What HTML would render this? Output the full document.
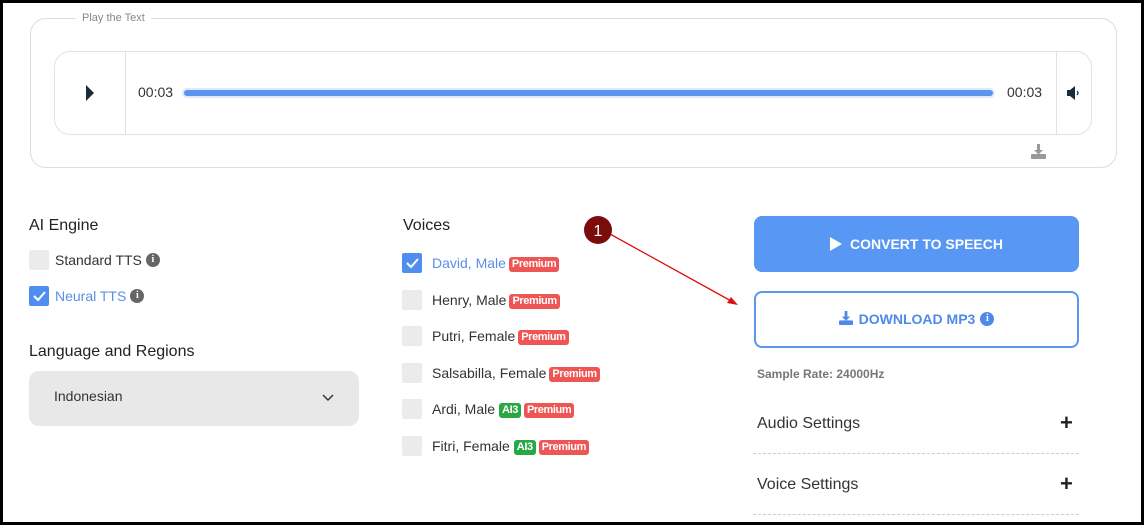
<!DOCTYPE html>
<html><head><style>
*{box-sizing:border-box;margin:0;padding:0}
body{width:1144px;height:525px;background:#000;font-family:"Liberation Sans",sans-serif;position:relative;overflow:hidden}
.page{position:absolute;left:3px;top:3px;width:1138px;height:519px;background:#fff}
.a{position:absolute}
.cb{position:absolute;width:20px;height:20px;background:#ebebeb;border-radius:2px}
.cb.on{background:#4f8ef0}
.lbl{position:absolute;font-size:14px;color:#333;line-height:16px;white-space:nowrap}
.tag{display:inline-block;font-size:11px;font-weight:bold;color:#fff;background:#ee5555;border-radius:3px;padding:1px 3px;line-height:13px;vertical-align:middle;margin-left:3px;letter-spacing:-0.4px}
.tag.g{background:#28a745;margin-left:4px}
.h{position:absolute;font-size:16px;color:#222}
.info{display:inline-block;width:14px;height:14px;border-radius:50%;background:#666;color:#fff;font-size:10px;font-weight:bold;text-align:center;line-height:14px;vertical-align:middle;margin-left:4px;margin-top:-2px;font-family:"Liberation Serif",serif}
.dash{position:absolute;left:753px;width:326px;border-top:1px dashed #ccc}
.plus{position:absolute;font-size:22px;font-weight:bold;color:#222;line-height:22px}
</style></head><body>
<div class="page"></div>
<div class="a" style="left:30px;top:18px;width:1087px;height:150px;border:1px solid #ddd;border-radius:16px"></div>
<div class="a" style="left:76px;top:12px;background:#fff;padding:0 6px;font-size:11px;color:#888">Play the Text</div>
<div class="a" style="left:54px;top:51px;width:1038px;height:84px;border:1px solid #e2e2e2;border-radius:16px"></div>
<div class="a" style="left:125px;top:52px;width:1px;height:82px;background:#e2e2e2"></div>
<div class="a" style="left:1056px;top:52px;width:1px;height:82px;background:#e2e2e2"></div>
<div class="a" style="left:86px;top:85px;width:0;height:0;border-left:8px solid #1a2a36;border-top:8px solid transparent;border-bottom:8px solid transparent"></div>
<div class="a" style="left:138px;top:84px;font-size:14px;color:#333">00:03</div>
<div class="a" style="left:1007px;top:84px;font-size:14px;color:#333">00:03</div>
<div class="a" style="left:182px;top:88px;width:813px;height:10px;border-radius:5px;background:#dfe9fb"></div>
<div class="a" style="left:184px;top:90px;width:809px;height:6px;border-radius:3px;background:#5a94ee"></div>
<svg class="a" style="left:1066px;top:86px" width="16" height="14" viewBox="0 0 16 14"><path d="M1 4h3l5-4v14l-5-4H1z" fill="#1a2a36"/><path d="M11 5q2 2 0 4" stroke="#1a2a36" fill="none" stroke-width="1.2"/></svg>
<svg class="a" style="left:1031px;top:144px" width="15" height="15" viewBox="0 0 15 15"><path d="M6 0h3v6h3l-4.5 4.5L3 6h3z" fill="#999"/><rect x="0" y="10" width="15" height="5" rx="1" fill="#999"/></svg>

<div class="h" style="left:29px;top:217px">AI Engine</div>
<div class="cb" style="left:29px;top:250px"></div>
<div class="lbl" style="left:55px;top:252px">Standard TTS<span class="info">i</span></div>
<div class="cb on" style="left:29px;top:286px"><svg width="20" height="20"><path d="M5 10l4 4 7-8" stroke="#fff" stroke-width="2" fill="none"/></svg></div>
<div class="lbl" style="left:55px;top:288px;color:#5a8fe8">Neural TTS<span class="info">i</span></div>
<div class="h" style="left:29px;top:343px">Language and Regions</div>
<div class="a" style="left:29px;top:371px;width:330px;height:55px;background:#e8e8e8;border-radius:10px"></div>
<div class="lbl" style="left:54px;top:388px">Indonesian</div>
<svg class="a" style="left:322px;top:394px" width="12" height="8"><path d="M1 1l5 5 5-5" stroke="#333" stroke-width="1.5" fill="none"/></svg>

<div class="h" style="left:403px;top:217px">Voices</div>
<div class="cb on" style="left:402px;top:253px"><svg width="20" height="20"><path d="M5 10l4 4 7-8" stroke="#fff" stroke-width="2" fill="none"/></svg></div>
<div class="lbl" style="left:432px;top:255px;color:#5a8fe8">David, Male<span class="tag">Premium</span></div>
<div class="cb" style="left:402px;top:290px"></div>
<div class="lbl" style="left:432px;top:292px">Henry, Male<span class="tag">Premium</span></div>
<div class="cb" style="left:402px;top:326px"></div>
<div class="lbl" style="left:432px;top:328px">Putri, Female<span class="tag">Premium</span></div>
<div class="cb" style="left:402px;top:363px"></div>
<div class="lbl" style="left:432px;top:365px">Salsabilla, Female<span class="tag">Premium</span></div>
<div class="cb" style="left:402px;top:399px"></div>
<div class="lbl" style="left:432px;top:401px">Ardi, Male<span class="tag g">AI3</span><span class="tag">Premium</span></div>
<div class="cb" style="left:402px;top:436px"></div>
<div class="lbl" style="left:432px;top:438px">Fitri, Female<span class="tag g">AI3</span><span class="tag">Premium</span></div>

<div class="a" style="left:754px;top:216px;width:325px;height:56px;background:#5897f3;border-radius:8px;color:#fff;font-weight:bold;font-size:14px;text-align:center;line-height:56px"><span style="display:inline-block;width:0;height:0;border-left:12px solid #fff;border-top:7px solid transparent;border-bottom:7px solid transparent;vertical-align:-2px;margin-right:8px"></span>CONVERT TO SPEECH</div>
<div class="a" style="left:754px;top:291px;width:325px;height:57px;border:2px solid #5b95ef;border-radius:8px;color:#4f8ae8;font-weight:bold;font-size:14px;text-align:center;line-height:53px"><svg width="14" height="14" viewBox="0 0 15 15" style="vertical-align:-1px;margin-right:6px"><path d="M6 0h3v6h3l-4.5 4.5L3 6h3z" fill="#4f8ae8"/><rect x="0" y="10" width="15" height="5" rx="1" fill="#4f8ae8"/></svg>DOWNLOAD MP3<span class="info" style="background:#4f8ae8;margin-left:5px">i</span></div>
<div class="a" style="left:757px;top:367px;font-size:12px;font-weight:bold;color:#777">Sample Rate: 24000Hz</div>
<div class="h" style="left:757px;top:415px;color:#333">Audio Settings</div>
<div class="plus" style="left:1060px;top:412px">+</div>
<div class="dash" style="top:453px"></div>
<div class="h" style="left:757px;top:476px;color:#333">Voice Settings</div>
<div class="plus" style="left:1060px;top:473px">+</div>
<div class="dash" style="top:514px"></div>

<svg class="a" style="left:0;top:0" width="1144" height="525"><line x1="610" y1="234" x2="733" y2="302" stroke="#dd1111" stroke-width="1.3"/><path d="M738 305l-11-2 4-6z" fill="#dd1111"/><circle cx="598" cy="230" r="14" fill="#7a0c0c"/><text x="598" y="236" fill="#fff" font-size="16" text-anchor="middle" font-family="Liberation Sans">1</text></svg>
</body></html>
